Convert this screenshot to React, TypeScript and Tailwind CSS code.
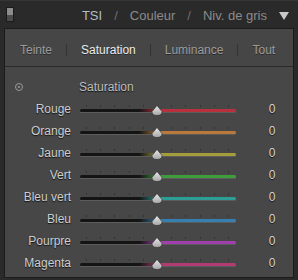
import React from 'react';

interface ColorRow {
  label: string;
  track: string;
}

const rows: ColorRow[] = [
  { label: 'Rouge', track: 'bg-[linear-gradient(to_right,#141414_38%,#b8323e_52%)]' },
  { label: 'Orange', track: 'bg-[linear-gradient(to_right,#141414_38%,#b9793a_52%)]' },
  { label: 'Jaune', track: 'bg-[linear-gradient(to_right,#141414_38%,#a49d3c_52%)]' },
  { label: 'Vert', track: 'bg-[linear-gradient(to_right,#141414_38%,#3f9d3c_52%)]' },
  { label: 'Bleu vert', track: 'bg-[linear-gradient(to_right,#141414_38%,#2b9e95_52%)]' },
  { label: 'Bleu', track: 'bg-[linear-gradient(to_right,#141414_38%,#357fb1_52%)]' },
  { label: 'Pourpre', track: 'bg-[linear-gradient(to_right,#141414_38%,#a23fae_52%)]' },
  { label: 'Magenta', track: 'bg-[linear-gradient(to_right,#141414_38%,#b33b74_52%)]' },
];

const ticks = Array.from({ length: 11 }, (_, i) => 6 + i * 14.2);

const Slider: React.FC<{ track: string }> = ({ track }) => (
  <div className="relative h-[22px] w-[156px]">
    {ticks.map((x) => (
      <div
        key={x}
        className="absolute top-[7px] h-[2px] w-px bg-[#333]"
        style={{ left: Math.round(x) }}
      />
    ))}
    <div className={`absolute left-0 right-0 top-[11px] h-[3px] rounded-full shadow-[0_1px_0_#5c5c5c] ${track}`} />
    <svg className="absolute left-[71px] top-[7px]" width="12" height="11" viewBox="0 0 12 11">
      <defs>
        <linearGradient id="thumb" x1="0" y1="0" x2="0" y2="1">
          <stop offset="0" stopColor="#e8e8e8" />
          <stop offset="1" stopColor="#a6a6a6" />
        </linearGradient>
      </defs>
      <path d="M6 0.5 L11 6.5 Q11 10.5 6 10.5 Q1 10.5 1 6.5 Z" fill="url(#thumb)" stroke="#2a2a2a" strokeWidth="0.6" />
    </svg>
  </div>
);

export default function App() {
  return (
    <div className="flex h-[280px] w-[298px] flex-col bg-[#2a2a2a] font-['Liberation_Sans',Arial,sans-serif]">
      <div className="flex h-[28px] items-center border-t border-[#353535]">
        <div className="ml-[6px] flex h-[15px] w-[8px] flex-col border border-[#1a1a1a]">
          <div className="flex-1 bg-[#8c8c8c]" />
          <div className="flex-1 bg-[#4c4c4c]" />
        </div>
        <div className="ml-auto flex items-center gap-[12px] pr-[9px] pt-[2px] text-[13px] text-[#8a8a8a]">
          <span className="text-[#b4bcc4]">TSI</span>
          <span className="text-[#6e6e6e]">/</span>
          <span>Couleur</span>
          <span className="text-[#6e6e6e]">/</span>
          <span>Niv. de gris</span>
          <svg width="10" height="8" viewBox="0 0 10 8">
            <path d="M0 0 H10 L5 8 Z" fill="#c9c9c9" />
          </svg>
        </div>
      </div>

      <div className="mx-[4px] mb-[2px] flex flex-1 flex-col border border-[#1c1c1c] bg-[#474747]">
        <div className="flex h-[38px] items-center gap-[14px] border-b border-[#2a2a2a] bg-[#464646] pl-[15px] pt-[5px] text-[12px] text-[#9c9c9c] [text-shadow:0_1px_0_#2a2a2a]">
          <span>Teinte</span>
          <span className="h-[12px] w-px bg-[#333]" />
          <span className="text-[#ececec]">Saturation</span>
          <span className="h-[12px] w-px bg-[#333]" />
          <span>Luminance</span>
          <span className="h-[12px] w-px bg-[#333]" />
          <span>Tout</span>
        </div>

        <div className="flex flex-col pt-[9px] text-[12px] text-[#cdcdcd] [text-shadow:0_1px_1px_#141414]">
          <div className="flex h-[22px] items-center">
            <div className="ml-[10px] flex h-[8px] w-[8px] items-center justify-center rounded-full border border-[#9a9a9a]">
              <div className="h-[2px] w-[2px] rounded-full bg-[#9a9a9a]" />
            </div>
            <span className="ml-[56px] text-[#bdbdbd]">Saturation</span>
          </div>
          {rows.map((r) => (
            <div key={r.label} className="flex h-[22px] items-center">
              <span className="w-[66px] text-right">{r.label}</span>
              <div className="ml-[9px]">
                <Slider track={r.track} />
              </div>
              <span className="ml-[18px] w-[36px] text-center text-[#d6d6d6]">0</span>
            </div>
          ))}
        </div>
      </div>
    </div>
  );
}
